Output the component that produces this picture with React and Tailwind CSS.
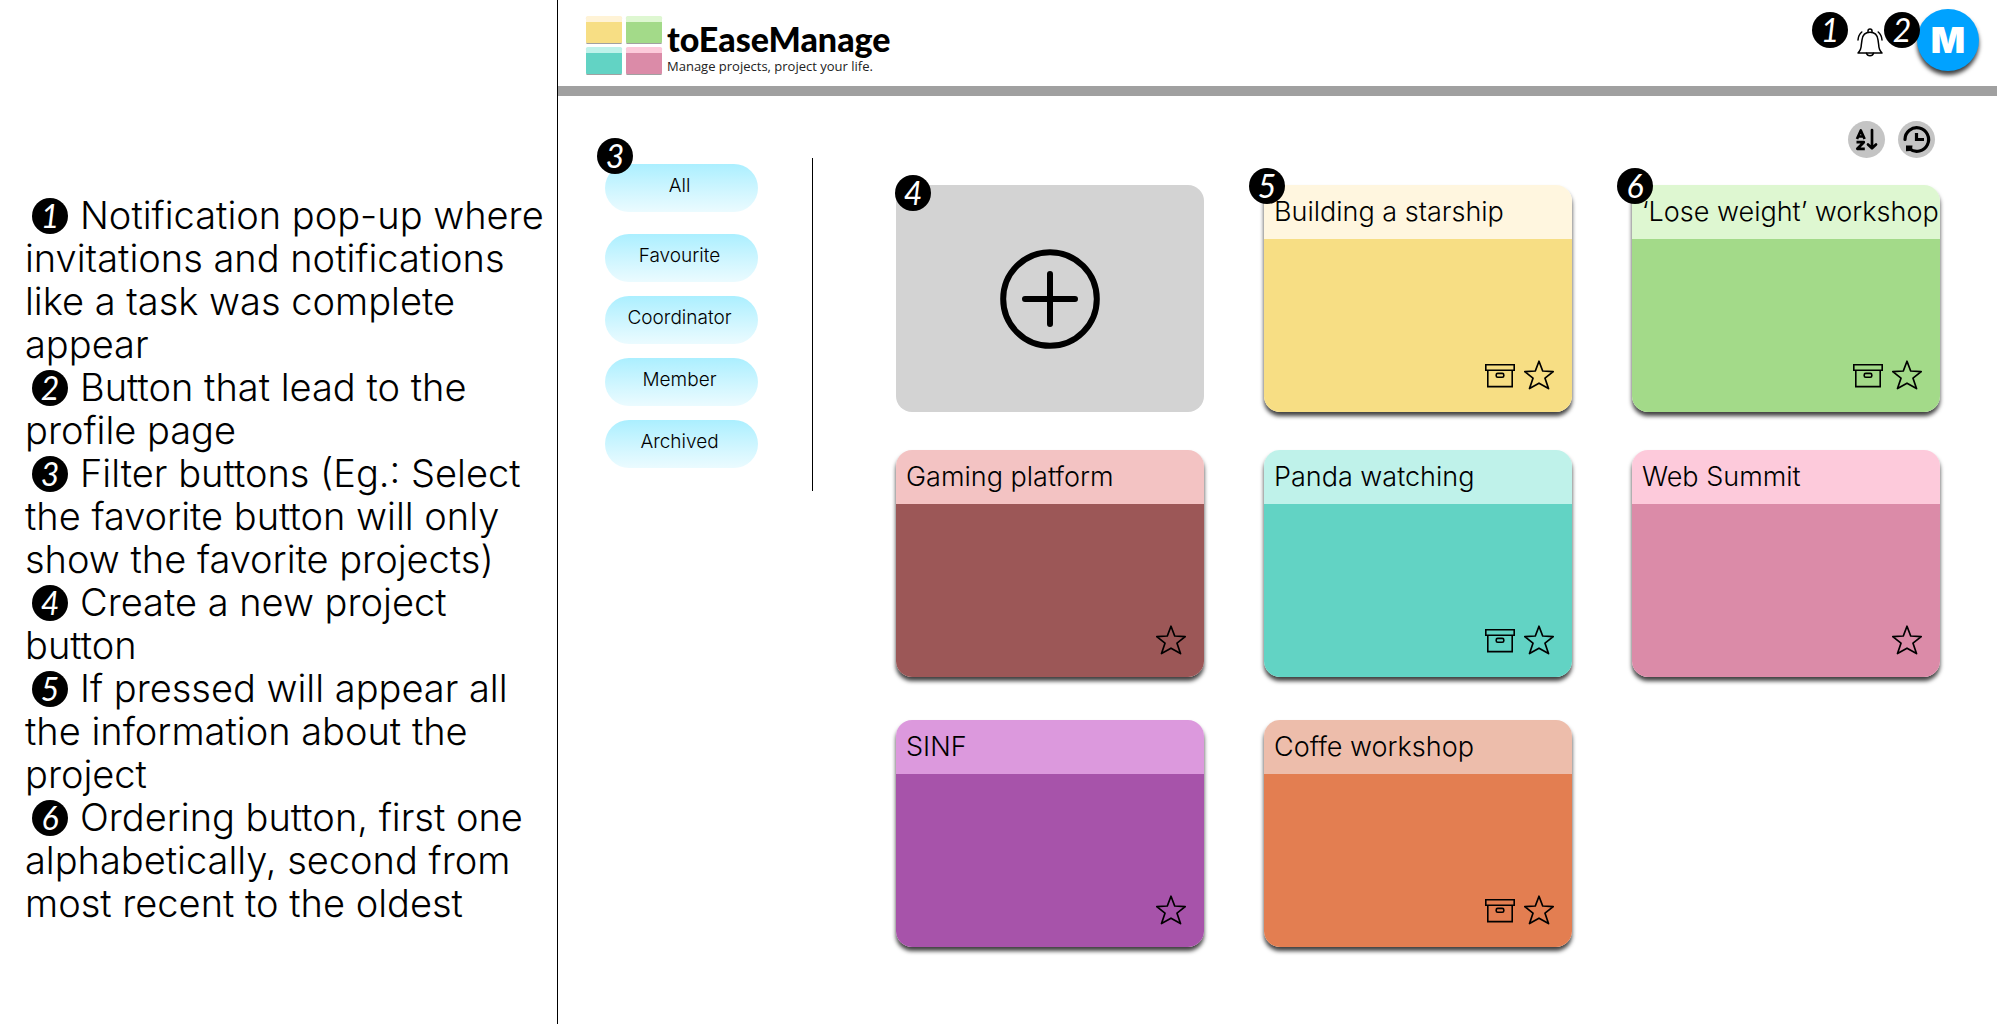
const legend = [
  ["Notification pop-up where", "invitations and notifications", "like a task was complete", "appear"],
  ["Button that lead to the", "profile page"],
  ["Filter buttons (Eg.: Select", "the favorite button will only", "show the favorite projects)"],
  ["Create a new project", "button"],
  ["If pressed will appear all", "the information about the", "project"],
  ["Ordering button, first one", "alphabetically, second from", "most recent to the oldest"],
];

const filters = ["All", "Favourite", "Coordinator", "Member", "Archived"];

const projects = [
  { name: "Building a starship", head: "bg-[#fff6df]", body: "bg-[#f7de84]", archive: true, badge: 5 },
  { name: "‘Lose weight’ workshop", head: "bg-[#def7d1]", body: "bg-[#a3da89]", archive: true, badge: 6 },
  { name: "Gaming platform", head: "bg-[#f3c3c3]", body: "bg-[#9c5757]" },
  { name: "Panda watching", head: "bg-[#bff2ea]", body: "bg-[#62d3c4]", archive: true },
  { name: "Web Summit", head: "bg-[#fdcadb]", body: "bg-[#db8ba8]" },
  { name: "SINF", head: "bg-[#dc99dd]", body: "bg-[#a753aa]" },
  { name: "Coffe workshop", head: "bg-[#edbdab]", body: "bg-[#e37e51]", archive: true },
];

function Badge({ n, className = "" }) {
  return (
    <span
      className={`inline-flex size-9 items-center justify-center rounded-full bg-black font-['Lato',sans-serif] text-[32px] leading-9 font-normal text-white italic ${className}`}
    >
      {n}
    </span>
  );
}

function Logo() {
  const tiles = [
    [0, 0, "#f7de84", "#fff3d6"],
    [40, 0, "#a3da89", "#def7d1"],
    [0, 31, "#62d3c4", "#bff2ea"],
    [40, 31, "#db8ba8", "#fdcadb"],
  ];
  return (
    <svg width="78" height="60" viewBox="-1 0 78 60" aria-hidden="true">
      {tiles.map(([x, y, body, head]) => (
        <g key={body}>
          <rect x={x} y={y + 1} width="36" height="27" rx="1.5" fill="#8a8a8a" opacity="0.8" />
          <rect x={x} y={y} width="36" height="27" rx="1.5" fill={head} />
          <path d={`M${x} ${y + 6}h36v19.5a1.5 1.5 0 0 1-1.5 1.5h-33a1.5 1.5 0 0 1-1.5-1.5z`} fill={body} />
        </g>
      ))}
    </svg>
  );
}

function BellIcon() {
  return (
    <svg width="26" height="30" viewBox="0 0 26 30" fill="none" stroke="#000" strokeWidth="1.5" strokeLinecap="round" strokeLinejoin="round" aria-hidden="true">
      <path d="M11 4.2V3a2 2 0 0 1 4 0v1.2" />
      <path d="M1 25c2.200-2.200 3.300-4.500 3.300-8.200l.7-5C5.500 7.500 8 4.200 13 4.200s7.500 3.300 8 7.600l.7 5c0 3.700 1.100 6 3.300 8.200z" />
      <path d="M9.500 25.200a3.600 3.200 0 0 0 7 0" />
      <path d="M4.800 4C3 5.500 1.200 8.500 1 12M21.200 4c1.800 1.500 3.600 4.500 3.800 8" />
    </svg>
  );
}

function SortAzIcon() {
  return (
    <svg width="37" height="37" viewBox="0 0 37 37" fill="none" stroke="#000" strokeWidth="2.700" aria-hidden="true">
      <path d="M9 18 12.800 9.500 16.600 18M10.500 15.500h4.600" strokeLinejoin="round" />
      <path d="M8.500 21.200h7.300l-6.500 6.600h7.500" strokeLinejoin="round" />
      <path d="M24 9v18M20 23.500l4 3.800 4-3.800" strokeWidth="2.700" strokeLinecap="round" strokeLinejoin="round" />
    </svg>
  );
}

function HistoryIcon() {
  return (
    <svg width="37" height="37" viewBox="0 0 37 37" fill="none" stroke="#000" strokeWidth="3.200" aria-hidden="true">
      <path d="M7 18.500a11.800 11.800 0 1 1 4.500 9.300" strokeLinecap="round" />
      <path d="M8 24.400l6.500.2-.5 4-2 1.500-4 .2z" fill="#000" stroke="none" />
      <path d="M18.500 12v6.500H26" strokeLinejoin="miter" />
    </svg>
  );
}

function PlusIcon() {
  return (
    <svg width="100" height="100" viewBox="0 0 100 100" fill="none" stroke="#000" strokeWidth="6" strokeLinecap="round" aria-hidden="true">
      <circle cx="50" cy="50" r="46.800" />
      <path d="M50 25v50M25 50h50" />
    </svg>
  );
}

function ArchiveIcon() {
  return (
    <svg width="30" height="30" viewBox="0 0 30 30" fill="none" stroke="#000" strokeWidth="1.600" aria-hidden="true">
      <path d="M.8 4.800h28.400v5.400H.8zM2.800 10.200h24.400v16.400H2.800z" />
      <rect x="11.200" y="13.400" width="7.600" height="3.800" rx="1.500" />
    </svg>
  );
}

function StarIcon() {
  return (
    <svg width="30" height="30" viewBox="0 0 30 30" fill="none" stroke="#000" strokeWidth="1.700" strokeLinejoin="round" aria-hidden="true">
      <path d="M15 1.200 18.700 11l10.500.6-8.200 6.600 3.500 10.400L15 23.200 5.500 28.600 9 18.200.8 11.600 11.300 11z" />
    </svg>
  );
}

function ProjectCard({ name, head, body, archive, badge }) {
  return (
    <article className="relative flex min-h-[227px] flex-col rounded-2xl shadow-[0_4px_4px_rgba(0,0,0,0.75)]">
      <h2 className={`rounded-t-2xl py-3 pl-[10px] text-[27px] leading-[30px] font-light whitespace-nowrap ${head}`}>{name}</h2>
      <div className={`flex flex-1 items-end justify-end gap-[9px] rounded-b-2xl pr-[18px] pb-[22px] ${body}`}>
        {archive && (
          <button type="button" aria-label={`Archive ${name}`}>
            <ArchiveIcon />
          </button>
        )}
        <button type="button" aria-label={`Add ${name} to favourites`}>
          <StarIcon />
        </button>
      </div>
      {badge && <Badge n={badge} className="absolute -left-[15px] -top-[17px]" />}
    </article>
  );
}

export default function App() {
  return (
    <div className="flex min-h-screen bg-white font-['Inter',sans-serif] text-black">
      <aside className="w-[558px] shrink-0 border-r border-black pt-[194px] pl-[25px]">
        <ol className="text-[38px] leading-[43px] font-light whitespace-nowrap">
          {legend.map((lines, i) => (
            <li key={lines[0]}>
              {lines.map((line, j) => (
                <p key={line} className={j === 0 ? "flex items-center gap-3 pl-[7px]" : ""}>
                  {j === 0 && <Badge n={i + 1} />}
                  {line}
                </p>
              ))}
            </li>
          ))}
        </ol>
      </aside>

      <div className="min-w-0 flex-1">
        <header className="flex h-24 items-start justify-between border-b-[10px] border-[#a0a0a0] pl-[27px]">
          <a href="#home" className="flex gap-1 pt-4">
            <Logo />
            <span className="flex flex-col pt-1">
              <span className="font-['Lato',sans-serif] text-[34px] leading-[38px] font-black">toEaseManage</span>
              <span className="font-['Open_Sans',sans-serif] text-[13px] leading-4 text-[#222]">Manage projects, project your life.</span>
            </span>
          </a>
          <div className="flex items-start pt-[9px] pr-[18px]">
            <Badge n={1} className="mt-[3px]" />
            <button type="button" aria-label="Notifications" className="mt-[19px] ml-[9px]">
              <BellIcon />
            </button>
            <div className="relative ml-[34px]">
              <button
                type="button"
                aria-label="Profile"
                className="flex size-[62px] items-center justify-center rounded-full bg-[#00a2ff] text-[36px] font-black text-white shadow-[0_4px_4px_rgba(0,0,0,0.75)]"
              >
                M
              </button>
              <Badge n={2} className="absolute -left-[33px] top-[3px]" />
            </div>
          </div>
        </header>

        <div className="flex items-start">
          <nav aria-label="Project filters" className="mt-[62px] flex h-[333px] w-[255px] shrink-0 flex-col gap-[14px] border-r border-black pt-[6px] pl-[47px]">
            {filters.map((label, i) => (
              <div key={label} className={i === 0 ? "relative mb-2 h-12" : "h-12"}>
                <button
                  type="button"
                  className="h-12 w-[153px] rounded-full bg-linear-to-b from-[#abefff] to-[#ebfbff] pr-1 pb-1 text-[19px] leading-6 font-light"
                >
                  {label}
                </button>
                {i === 0 && <Badge n={3} className="absolute -left-2 -top-[26px]" />}
              </div>
            ))}
          </nav>

          <main className="min-w-0 flex-1 pt-[25px] pr-[57px] pl-[83px]">
            <div className="flex justify-end gap-[13px] pr-[5px]">
              <button type="button" aria-label="Sort alphabetically" className="rounded-full bg-[#c4c4c4]">
                <SortAzIcon />
              </button>
              <button type="button" aria-label="Sort by most recent" className="rounded-full bg-[#c4c4c4]">
                <HistoryIcon />
              </button>
            </div>
            <div className="mt-[27px] grid grid-cols-3 grid-rows-[265px_270px_auto] items-start gap-x-[60px]">
              <button
                type="button"
                aria-label="Create a new project"
                className="relative flex min-h-[227px] w-full items-center justify-center rounded-2xl bg-[#d3d3d3]"
              >
                <PlusIcon />
                <Badge n={4} className="absolute -left-px -top-[10px]" />
              </button>
              {projects.map((p) => (
                <ProjectCard key={p.name} {...p} />
              ))}
            </div>
          </main>
        </div>
      </div>
    </div>
  );
}
